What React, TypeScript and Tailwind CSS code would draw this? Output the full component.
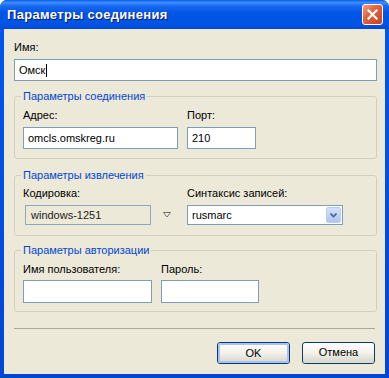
import { useState } from "react";

const font = { fontFamily: '"Liberation Sans", Arial, sans-serif' };

function Field({ value, w, h, caret }: { value?: string; w: string; h: string; caret?: boolean }) {
  return (
    <div className={`${w} ${h} flex items-center border border-[#7F9DB9] bg-white pl-[4px] text-[11px] text-black`}>
      <span>{value}</span>
      {caret && <span className="ml-[1px] inline-block h-[13px] w-[1px] bg-black" />}
    </div>
  );
}

function Group({ title, children, pb }: { title: string; children: React.ReactNode; pb: string }) {
  return (
    <fieldset className={`rounded-[3px] border border-[#D0D0BF] px-[8px] ${pb}`}>
      <legend className="-ml-[2px] px-[2px] text-[11px] leading-[13px] text-[#0046D5]">{title}</legend>
      {children}
    </fieldset>
  );
}

function XpButton({ label, isDefault }: { label: string; isDefault?: boolean }) {
  return (
    <button className="h-[22px] w-[73px] rounded-[3px] border border-[#003C74] bg-gradient-to-b from-white via-[#F2F1EB] to-[#D8D4C8] p-0">
      <div
        className={`flex h-full w-full items-center justify-center rounded-[2px] text-[11px] text-black ${
          isDefault ? "border-[2px] border-[#A8C2F2]" : "border-b border-[#E0DCD0]"
        }`}
      >
        {label}
      </div>
    </button>
  );
}

export default function App() {
  const [name] = useState("Омск");

  return (
    <div style={font} className="flex h-[378px] w-[389px] flex-col overflow-hidden rounded-t-[7px] bg-gradient-to-b from-[#0058EE] to-[#0046D5]">
      {/* Title bar */}
      <div className="flex h-[29px] shrink-0 items-center justify-between bg-[linear-gradient(to_bottom,#0A5BEA_0%,#3D8EFF_9%,#1A6AF2_20%,#0055E5_45%,#0054E3_85%,#0048D8_100%)] pl-[7px] pr-[6px]">
        <span className="text-[13px] font-bold tracking-[0.3px] text-white [text-shadow:1px_1px_0_#0A1A6C]">
          Параметры соединения
        </span>
        <div className="flex h-[21px] w-[21px] items-center justify-center rounded-[3px] border border-white bg-[linear-gradient(135deg,#F0A08A_0%,#E1633F_40%,#C8401D_100%)]">
          <svg width="11" height="11" viewBox="0 0 11 11">
            <path d="M1.5 1.5 L9.5 9.5 M9.5 1.5 L1.5 9.5" stroke="white" strokeWidth="2.2" strokeLinecap="square" />
          </svg>
        </div>
      </div>

      {/* Body */}
      <div className="mx-[4px] mb-[4px] flex flex-1 flex-col bg-[#ECE9D8] pl-[10px] pr-[8px]">
        <div className="mt-[12px] text-[11px] leading-[13px] text-black">Имя:</div>
        <div className="mt-[5px]">
          <Field value={name} w="w-full" h="h-[22px]" caret />
        </div>

        <div className="mt-[9px]">
          <Group title="Параметры соединения" pb="pb-[9px]">
            <div className="mt-[6px] flex gap-[9px]">
              <div>
                <div className="text-[11px] leading-[13px] text-black">Адрес:</div>
                <div className="mt-[5px]">
                  <Field value="omcls.omskreg.ru" w="w-[155px]" h="h-[22px]" />
                </div>
              </div>
              <div>
                <div className="text-[11px] leading-[13px] text-black">Порт:</div>
                <div className="mt-[5px]">
                  <Field value="210" w="w-[69px]" h="h-[22px]" />
                </div>
              </div>
            </div>
          </Group>
        </div>

        <div className="mt-[10px]">
          <Group title="Параметры извлечения" pb="pb-[10px]">
            <div className="mt-[5px] flex">
              <div className="w-[164px]">
                <div className="text-[11px] leading-[13px] text-black">Кодировка:</div>
                <div className="mt-[5px] flex items-center">
                  <div className="ml-[2px] flex h-[20px] w-[126px] items-center border border-[#8FA7C3] pl-[5px] text-[11px] text-[#222]">
                    windows-1251
                  </div>
                  <svg className="ml-[12px]" width="8" height="6" viewBox="0 0 8 6">
                    <path d="M0.5 0.5 H7.5 L4 5 Z" fill="#F4F4EE" stroke="#6D6D6D" strokeWidth="1" />
                  </svg>
                </div>
              </div>
              <div>
                <div className="text-[11px] leading-[13px] text-black">Синтаксис записей:</div>
                <div className="mt-[5px] flex h-[20px] w-[156px] items-center justify-between border border-[#7F9DB9] bg-white pl-[4px] pr-[1px]">
                  <span className="text-[11px] text-black">rusmarc</span>
                  <div className="flex h-[16px] w-[15px] items-center justify-center rounded-[2px] border border-[#B9CDF7] bg-gradient-to-b from-[#D4E1FD] to-[#AFC4F5]">
                    <svg width="7" height="5" viewBox="0 0 7 5">
                      <path d="M0.5 0.5 L3.5 3.5 L6.5 0.5" fill="none" stroke="#4D6185" strokeWidth="1.6" />
                    </svg>
                  </div>
                </div>
              </div>
            </div>
          </Group>
        </div>

        <div className="mt-[8px]">
          <Group title="Параметры авторизации" pb="pb-[8px]">
            <div className="mt-[6px] flex gap-[9px]">
              <div>
                <div className="text-[11px] leading-[13px] text-black">Имя пользователя:</div>
                <div className="mt-[4px]">
                  <Field w="w-[129px]" h="h-[23px]" />
                </div>
              </div>
              <div>
                <div className="text-[11px] leading-[13px] text-black">Пароль:</div>
                <div className="mt-[4px]">
                  <Field w="w-[98px]" h="h-[23px]" />
                </div>
              </div>
            </div>
          </Group>
        </div>

        <div className="mr-[2px] mt-[16px] h-[2px] border-t border-[#ACA899] border-b-white" />

        <div className="mr-[2px] mt-[12px] flex justify-end gap-[12px]">
          <XpButton label="OK" isDefault />
          <XpButton label="Отмена" />
        </div>
      </div>
    </div>
  );
}
